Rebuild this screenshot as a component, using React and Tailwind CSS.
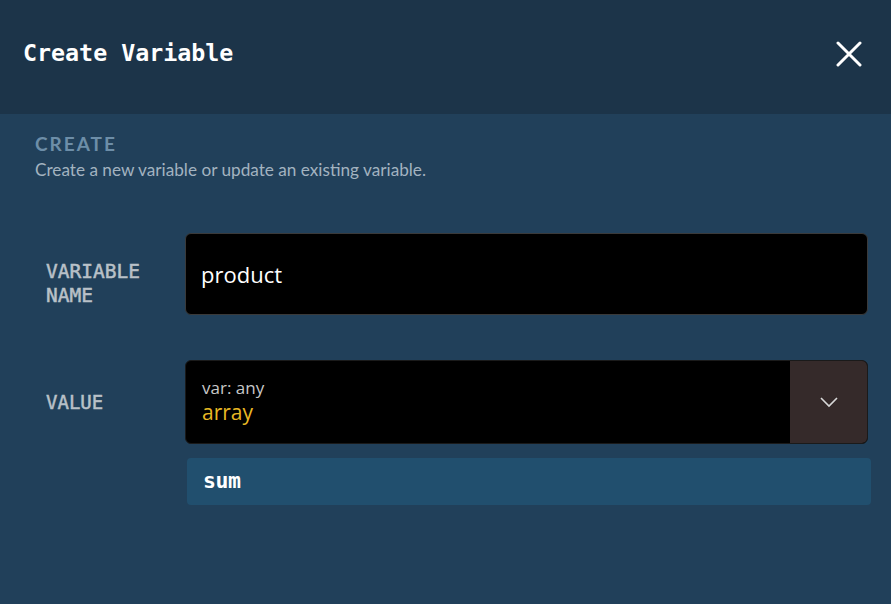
import React from "react";

export default function App() {
  return (
    <div className="w-[891px] h-[604px] overflow-hidden bg-[#21405a] flex flex-col">
      <div className="h-[114px] shrink-0 bg-[#1c3449] flex items-center justify-between pl-[23px] pr-[29px] pb-[7px]">
        <div className="text-[23.3px] font-bold text-white [font-family:'DejaVu_Sans_Mono',monospace]">
          Create Variable
        </div>
        <svg width="26" height="26" viewBox="0 0 26 26">
          <path d="M2 2 L24 24 M24 2 L2 24" stroke="white" strokeWidth="3" strokeLinecap="round" />
        </svg>
      </div>
      <div className="pl-[35px] pt-[18px] [font-family:Lato,sans-serif]">
        <div className="text-[19px] font-bold tracking-[2px] text-[#6d8ea8] leading-[24px]">CREATE</div>
        <div className="text-[17.2px] text-[#a3b3c0] leading-[22px] mt-[3px]">
          Create a new variable or update an existing variable.
        </div>
      </div>
      <div className="flex flex-col pl-[46px] pr-[23px] mt-[52px]">
        <div className="flex items-start">
          <div className="w-[139px] shrink-0 mt-[27px] text-[19.5px] leading-[24px] text-[#b9c1c8] [-webkit-text-stroke:0.5px_#b9c1c8] [font-family:'DejaVu_Sans_Mono',monospace]">
            VARIABLE
            <br />
            NAME
          </div>
          <div className="flex-1 h-[82px] bg-black rounded-[6px] border border-[#3a3a3a] flex items-center pl-[15px]">
            <span className="text-[22px] text-white [font-family:'Open_Sans',sans-serif]">product</span>
          </div>
        </div>
        <div className="flex items-center mt-[45px]">
          <div className="w-[139px] shrink-0 text-[19px] text-[#b9c1c8] [-webkit-text-stroke:0.5px_#b9c1c8] [font-family:'DejaVu_Sans_Mono',monospace]">
            VALUE
          </div>
          <div className="flex-1 h-[84px] bg-black rounded-[6px] border border-[#1a1a1a] flex overflow-hidden">
            <div className="flex-1 flex flex-col justify-center pl-[16px] pb-[3px] [font-family:'Open_Sans',sans-serif]">
              <span className="text-[17px] text-[#c8c8c8] leading-[22px]">var: any</span>
              <span className="text-[21px] text-[#e8b824] leading-[26px]">array</span>
            </div>
            <div className="w-[77px] bg-[#352a2a] flex items-center justify-center">
              <svg width="20" height="12" viewBox="0 0 20 12">
                <path d="M2 2 L10 10 L18 2" stroke="#d8d8d8" strokeWidth="1.6" fill="none" />
              </svg>
            </div>
          </div>
        </div>
        <div className="flex mt-[14px]">
          <div className="w-[141px] shrink-0" />
          <div className="flex-1 h-[47px] mr-[-3px] bg-[#214f6e] rounded-[4px] flex items-center pl-[16px]">
            <span className="text-[21.5px] font-bold text-white [font-family:'DejaVu_Sans_Mono',monospace] tracking-[-0.5px]">sum</span>
          </div>
        </div>
      </div>
    </div>
  );
}
